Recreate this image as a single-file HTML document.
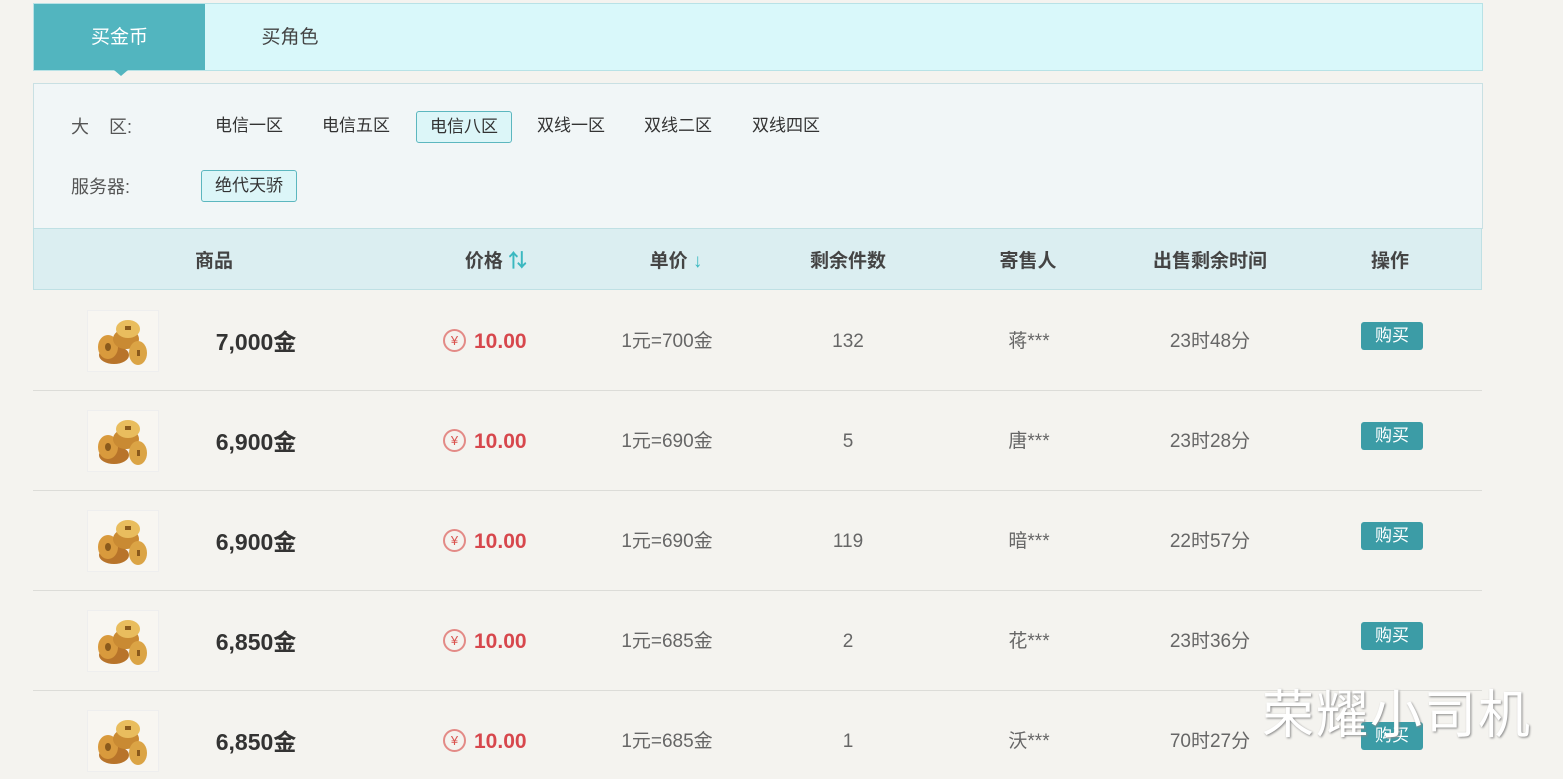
<!DOCTYPE html><html><head><meta charset="utf-8"><style>
body{margin:0;width:1563px;height:779px;background:#f4f3ef;font-family:"Liberation Sans","Noto Sans CJK SC",sans-serif;position:relative;overflow:hidden;color:#333}
.a{position:absolute}
.tabs{left:33px;top:3px;width:1448px;height:66px;background:#d9f8fa;border:1px solid #b8e2e6}
.t1{left:0;top:0;width:171px;height:66px;background:#52b5bf;color:#fff;font-size:19px;line-height:68px;text-align:center}
.t2{left:171px;top:0;width:170px;height:66px;line-height:68px;text-align:center;font-size:19px;color:#444}
.panel{left:33px;top:83px;width:1448px;height:145px;background:#f1f6f7;border:1px solid #c9e0e3;border-bottom:none}
.lbl{font-size:18px;color:#555;line-height:24px;height:24px}
.opt{font-size:17px;color:#333;height:30px;line-height:30px;padding:0 13px;top:111px}
.sel{background:#dcf6f8;border:1px solid #5cb7bf;border-radius:3px;line-height:30px;height:30px}
.head{left:33px;top:228px;width:1449px;height:62px;background:#dbeef1;border:1px solid #bfe0e4;box-sizing:border-box}
.h{top:250px;font-size:19px;font-weight:bold;color:#444;transform:translateX(-50%);white-space:nowrap;line-height:24px;height:24px}
.c{transform:translateX(-50%);white-space:nowrap;font-size:19px;color:#666;line-height:24px;height:24px}
.sep{left:33px;width:1449px;height:1px;background:#dcdcd8}
.btn{width:62px;height:28px;background:#3c9ca6;border-radius:3px;color:#fff;font-size:17px;line-height:28px;text-align:center}
.coin{width:70px;height:60px;background:#f8f6f1;border:1px solid #eee}
.yuan{width:23px;height:23px;border:2px solid #e38a86;border-radius:50%;color:#d9534f;font-size:13px;line-height:19px;text-align:center;box-sizing:border-box}
</style></head><body>
<div class="a tabs"><div class="a t1">买金币</div><div class="a t2">买角色</div></div>
<div class="a" style="left:114px;top:70px;width:0;height:0;border-left:7px solid transparent;border-right:7px solid transparent;border-top:6px solid #52b5bf"></div>
<div class="a panel"></div>
<div class="a lbl" style="left:71px;top:115px">大&nbsp;&nbsp;&nbsp;&nbsp;区:</div>
<div class="a lbl" style="left:71px;top:175px">服务器:</div>
<div class="a opt" style="left:202px">电信一区</div>
<div class="a opt" style="left:309px">电信五区</div>
<div class="a opt sel" style="left:416px;padding:0 13px">电信八区</div>
<div class="a opt" style="left:524px">双线一区</div>
<div class="a opt" style="left:631px">双线二区</div>
<div class="a opt" style="left:739px">双线四区</div>
<div class="a opt sel" style="left:201px;top:170px">绝代天骄</div>
<div class="a head"></div>
<div class="a h" style="left:214px">商品</div>
<div class="a h" style="left:496px">价格 <span style="color:#3bb8c0">⇅</span></div>
<div class="a h" style="left:676px">单价 <span style="color:#3bb8c0">↓</span></div>
<div class="a h" style="left:848px">剩余件数</div>
<div class="a h" style="left:1028px">寄售人</div>
<div class="a h" style="left:1210px">出售剩余时间</div>
<div class="a h" style="left:1390px">操作</div>
<div id="rows"></div>
<script>
var d=[["7,000","700","132","蒋","23时48分"],["6,900","690","5","唐","23时28分"],["6,900","690","119","暗","22时57分"],["6,850","685","2","花","23时36分"],["6,850","685","1","沃","70时27分"]];
var h="";d.forEach(function(r,i){var y=290+i*100;
h+='<div class="a coin" style="left:87px;top:'+(y+20)+'px"><svg width="70" height="60"><ellipse cx="26" cy="44" rx="15" ry="9" fill="#b8742a"/><ellipse cx="20" cy="36" rx="10" ry="12" fill="#d99a3d"/><ellipse cx="20" cy="36" rx="3" ry="4" fill="#8a5a1c"/><ellipse cx="38" cy="28" rx="13" ry="10" fill="#c98a33"/><ellipse cx="40" cy="18" rx="12" ry="9" fill="#e9bd5e"/><rect x="37" y="15" width="6" height="4" fill="#8a5a1c"/><ellipse cx="50" cy="42" rx="9" ry="12" fill="#dba445"/><rect x="49" y="39" width="3" height="6" fill="#8a5a1c"/></svg></div>';
h+='<div class="a c" style="left:256px;top:'+(y+39)+'px;font-size:23px;font-weight:bold;color:#333;line-height:26px;height:26px">'+r[0]+'金</div>';
h+='<div class="a yuan" style="left:443px;top:'+(y+39)+'px">¥</div>';
h+='<div class="a" style="left:474px;top:'+(y+40)+'px;font-size:21px;font-weight:bold;color:#d7474d;line-height:24px">10.00</div>';
h+='<div class="a c" style="left:667px;top:'+(y+40)+'px">1元='+r[1]+'金</div>';
h+='<div class="a c" style="left:848px;top:'+(y+40)+'px">'+r[2]+'</div>';
h+='<div class="a c" style="left:1029px;top:'+(y+40)+'px">'+r[3]+'***</div>';
h+='<div class="a c" style="left:1210px;top:'+(y+40)+'px">'+r[4]+'</div>';
h+='<div class="a btn" style="left:1361px;top:'+(y+32)+'px">购买</div>';
if(i<4)h+='<div class="a sep" style="top:'+(y+100)+'px"></div>';});
document.getElementById("rows").innerHTML=h;
</script>
<div class="a" style="left:1262px;top:684px;font-size:52px;line-height:64px;color:#fff;text-shadow:1px 1px 2px #888;letter-spacing:2px">荣耀小司机</div>
</body></html>
